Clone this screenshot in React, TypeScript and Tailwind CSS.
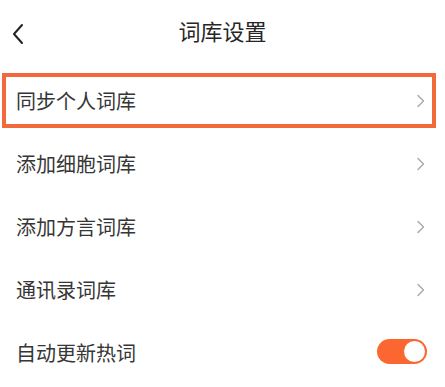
import React from "react";

const Chevron = () => (
  <svg width="10" height="14" viewBox="0 0 10 14" className="shrink-0">
    <path d="M2 1.5 L7.5 7 L2 12.5" fill="none" stroke="#a8a8a8" strokeWidth="1.4" strokeLinecap="round" strokeLinejoin="round" />
  </svg>
);

const font = { fontFamily: '"Noto Sans CJK SC", "Noto Sans", sans-serif' };

export default function App() {
  const rows = ["添加细胞词库", "添加方言词库", "通讯录词库"];
  return (
    <div className="w-[445px] h-[387px] bg-white text-[#363636] overflow-hidden" style={font}>
      <div className="relative h-[66px] flex items-center justify-center pb-[7px]">
        <svg width="14" height="22" viewBox="0 0 14 22" className="absolute left-[11px] top-[23px]">
          <path d="M11 2 L3 11 L11 20" fill="none" stroke="#222" strokeWidth="2" strokeLinecap="round" strokeLinejoin="round" />
        </svg>
        <span className="text-[22px] leading-none text-[#262626]">词库设置</span>
      </div>
      <div className="mt-[7px] mx-[2px] w-[434px] h-[55px] border-4 border-[#f26a3c] flex items-center justify-between pl-[10px] pr-[6px]">
        <span className="text-[20px] leading-none">同步个人词库</span>
        <Chevron />
      </div>
      <div className="pt-[4px]">
        {rows.map((r) => (
          <div key={r} className="h-[63px] flex items-center justify-between pl-4 pr-[19px]">
            <span className="text-[20px] leading-none">{r}</span>
            <Chevron />
          </div>
        ))}
        <div className="h-[63px] flex items-center justify-between pl-4 pr-[18px]">
          <span className="text-[20px] leading-none">自动更新热词</span>
          <div className="w-[50px] h-[25px] rounded-full bg-[#fc6631] flex items-center justify-end pr-[2px] -mt-[2px]">
            <div className="w-[21px] h-[21px] rounded-full bg-white" />
          </div>
        </div>
      </div>
    </div>
  );
}
